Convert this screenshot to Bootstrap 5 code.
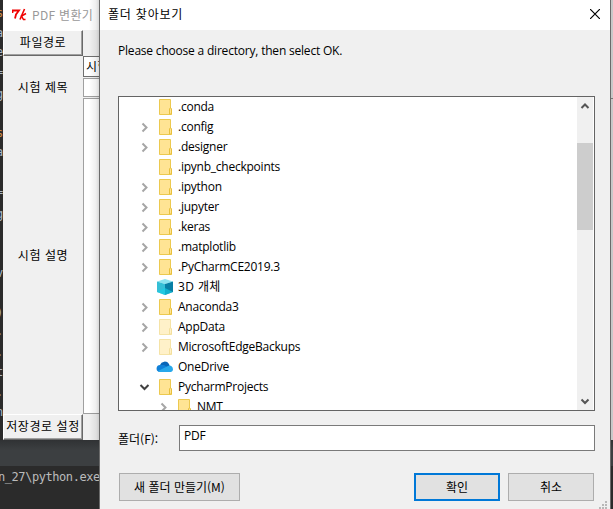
<!DOCTYPE html>
<html lang="ko">
<head>
<meta charset="utf-8">
<title>폴더 찾아보기</title>
<link rel="stylesheet" href="https://cdn.jsdelivr.net/npm/bootstrap@5.3.0/dist/css/bootstrap.min.css">
<style>
html,body{width:613px;height:509px;overflow:hidden}
body{background:#2b2b2b;color:#000;font:12px/20px "Open Sans","Noto Sans CJK KR",sans-serif;letter-spacing:-.24px;position:relative}
.ko{font-family:"Noto Sans CJK KR",sans-serif;letter-spacing:.55px}
.ide{position:absolute;inset:0;font:12px/20px "DejaVu Sans Mono",monospace;letter-spacing:-.44px;color:#a9b7c6}
.ide-bar{height:26px;margin-top:440px;background:linear-gradient(#303234,#3c3f41 10px)}
.ide-glyph{position:absolute;left:-4px}
.key{color:#cc8844}
.tkwin{position:absolute;left:3px;top:0;width:610px;height:440px;background:#f0f0f0}
.tkhead{height:30px;background:#fff;color:#999;padding-left:9px}
.tkside{width:80px}
.tkbtn{height:26px;background:#f0f0f0;border:1px solid;border-color:#fff #696969 #696969 #fff;box-shadow:inset -1px -1px #a0a0a0;line-height:22px;white-space:nowrap}
.tklabel{height:62px;line-height:62px}
.tkdesc{height:296px;line-height:274px}
.entry{border:1px solid #a0a0a0;background:#fff;border-right:0}
.shade{position:absolute;left:86px;top:0;width:14px;height:440px;background:linear-gradient(90deg,#0000,#0001 50%,#0004)}
.edge{position:absolute;left:611px;top:0;width:2px;height:440px;background:#c8c8c8}
.edge i{display:block;height:1px;margin-top:98px;background:#777}
.dlg{position:absolute;left:99px;top:0;width:512px;height:509px;background:#f0f0f0;border:solid #6b6b6b;border-width:0 1px}
.dlghead{height:30px;background:#fff;padding:0 10px 2px 8px}
.tree{height:315px;margin:0 15px 0 18px;border:1px solid #646464;background:#fff;overflow:hidden}
.item{height:20px;line-height:19px;padding-left:20px;white-space:nowrap}
.item.sub{padding-left:39px}
.tw{width:11px;height:20px;flex:none;fill:none;stroke:#a6a6a6;stroke-width:2}
.tw.open{stroke:#404040}
.ic{width:18px;height:20px;margin:0 4px 0 6px;flex:none}
.faded{opacity:.5}
.bar{width:17px;background:#f0f0f0;border-right:1px solid #fff}
.bar svg{width:16px;height:17px;display:block}
.thumb{height:87px;background:#cdcdcd;margin-top:29px}
.field{width:416px;height:26px;border:1px solid #7a7a7a;background:#fff;padding-left:4px;line-height:20px}
.wbtn{height:28px;background:#e1e1e1;border:1px solid #adadad;border-radius:0;padding:0;font-size:12px;line-height:24px;color:#000}
.wbtn.ok{border:2px solid #0078d7;line-height:22px}
.grip{position:absolute;right:2px;bottom:0;width:9px;height:8px}
</style>
<script src="https://cdn.jsdelivr.net/npm/bootstrap@5.3.0/dist/js/bootstrap.bundle.min.js"></script>
</head>
<body>
<svg width="0" height="0" class="position-absolute">
<defs>
<symbol id="folder" viewBox="0 0 18 20"><path d="M3.500 2.500h11v9l1 1v5h-12z" fill="#ffe494" stroke="#ecc94f"/><path d="M13.500 17v-5l1-1.500 1 1.500v5z" fill="#ffe494" stroke="#e8c03c"/></symbol>
<symbol id="right" viewBox="0 0 11 20"><path d="M3.500 6.500l4 4-4 4"/></symbol>
<symbol id="down" viewBox="0 0 11 20"><path d="M1.500 8l4 4 4-4"/></symbol>
</defs></svg>

<div class="ide">
<span class="ide-glyph key" style="top:3px">s</span><span class="ide-glyph" style="top:23px">a</span><span class="ide-glyph" style="top:42px">e</span><span class="ide-glyph" style="top:62px">=</span><span class="ide-glyph" style="top:84px">g</span><span class="ide-glyph key" style="top:123px">s</span><span class="ide-glyph" style="top:142px">a</span><span class="ide-glyph" style="top:182px">=</span><span class="ide-glyph" style="top:204px">g</span><span class="ide-glyph" style="top:263px">v</span><span class="ide-glyph" style="top:303px">)</span><span class="ide-glyph" style="top:321px">.</span><span class="ide-glyph" style="top:342px">.</span><span class="ide-glyph" style="top:362px">t</span><span class="ide-glyph" style="top:382px">.</span><span class="ide-glyph" style="top:402px">n</span>
<div class="ide-bar"></div>
<div class="text-nowrap" style="margin-top:1px;margin-left:-2px;color:#bbb">n_27\python.exe</div>
</div>

<div class="tkwin">
<div class="tkhead d-flex align-items-center">
<svg width="15" height="14" viewBox="0 0 15 14" class="me-1" fill="none" stroke="#f00000"><path d="M.5 5V2.500h6.500L4 6.500 3 10.500" stroke-width="1.800"/><path d="M12.500 1L8 11.500" stroke-width="1.600"/><path d="M14 5.500L9.500 8l2 3.500h2" stroke-width="1.500"/></svg>
<span style="font-family:'Noto Sans CJK KR',sans-serif;letter-spacing:.3px;padding:0 0 1px 1px">PDF 변환기</span>
</div>
<div class="d-flex">
<div class="tkside ko text-center">
<div class="tkbtn">파일경로</div>
<div class="tklabel">시험 제목</div>
<div class="tkdesc">시험 설명</div>
<div class="tkbtn">저장경로 설정</div>
</div>
<div class="flex-fill ko">
<div style="height:26px"></div>
<div class="entry" style="height:21px;padding-left:2px;line-height:18px;border-color:#707070">시험</div>
<div class="entry" style="height:19px;margin-top:1px"></div>
<div class="entry" style="height:316px;margin-top:1px"></div>
</div>
</div>
<div class="shade"></div>
</div>
<div class="edge"><i></i></div>

<div class="dlg d-flex flex-column">
<div class="dlghead d-flex align-items-center justify-content-between ko"><span style="letter-spacing:.8px">폴더 찾아보기</span>
<svg width="10" height="10" viewBox="0 0 10 10"><path d="M0 0l10 10M10 0L0 10" stroke="#000" stroke-width="1.200"/></svg></div>
<div style="padding:11px 0 0 18px;height:66px;letter-spacing:-.2px">Please choose a directory, then select OK.</div>
<div class="tree d-flex flex-none">
<div class="flex-fill">
<div class="item d-flex"><svg class="tw"></svg><svg class="ic"><use href="#folder"/></svg><span>.conda</span></div>
<div class="item d-flex"><svg class="tw"><use href="#right"/></svg><svg class="ic"><use href="#folder"/></svg><span>.config</span></div>
<div class="item d-flex"><svg class="tw"><use href="#right"/></svg><svg class="ic"><use href="#folder"/></svg><span>.designer</span></div>
<div class="item d-flex"><svg class="tw"></svg><svg class="ic"><use href="#folder"/></svg><span>.ipynb_checkpoints</span></div>
<div class="item d-flex"><svg class="tw"><use href="#right"/></svg><svg class="ic"><use href="#folder"/></svg><span>.ipython</span></div>
<div class="item d-flex"><svg class="tw"><use href="#right"/></svg><svg class="ic"><use href="#folder"/></svg><span>.jupyter</span></div>
<div class="item d-flex"><svg class="tw"><use href="#right"/></svg><svg class="ic"><use href="#folder"/></svg><span>.keras</span></div>
<div class="item d-flex"><svg class="tw"><use href="#right"/></svg><svg class="ic"><use href="#folder"/></svg><span>.matplotlib</span></div>
<div class="item d-flex"><svg class="tw"><use href="#right"/></svg><svg class="ic"><use href="#folder"/></svg><span>.PyCharmCE2019.3</span></div>
<div class="item d-flex"><svg class="tw"></svg><svg class="ic" viewBox="0 0 18 20"><path d="M1 4.500L9 2l8 2.500L9 7z" fill="#8be4f0"/><path d="M1 4.500L9 7v11l-8-3z" fill="#35bfd6"/><path d="M17 4.500L9 7v11l8-3z" fill="#087fa5"/><path d="M1 15l8-4 8 4-8 3z" fill="#16d0e8" opacity=".6"/></svg><span style="letter-spacing:.4px">3D 개체</span></div>
<div class="item d-flex"><svg class="tw"><use href="#right"/></svg><svg class="ic"><use href="#folder"/></svg><span>Anaconda3</span></div>
<div class="item d-flex"><svg class="tw"><use href="#right"/></svg><svg class="ic faded"><use href="#folder"/></svg><span>AppData</span></div>
<div class="item d-flex"><svg class="tw"><use href="#right"/></svg><svg class="ic faded"><use href="#folder"/></svg><span>MicrosoftEdgeBackups</span></div>
<div class="item d-flex"><svg class="tw"></svg><svg class="ic" viewBox="0 0 18 20"><path d="M4 8a5 5 0 0 1 9-1l1 3-10 2z" fill="#0866b8"/><path d="M4 8a3.600 3.600 0 0 0-1 7l10-4-5-3z" fill="#1080d8"/><path d="M12 9a3.200 3.200 0 0 1 3 6H3.500L2 14z" fill="#28a8ea"/></svg><span>OneDrive</span></div>
<div class="item d-flex"><svg class="tw open"><use href="#down"/></svg><svg class="ic"><use href="#folder"/></svg><span>PycharmProjects</span></div>
<div class="item sub d-flex"><svg class="tw"><use href="#right"/></svg><svg class="ic"><use href="#folder"/></svg><span>NMT</span></div>
</div>
<div class="bar d-flex flex-column">
<svg viewBox="0 0 16 17"><path d="M4.500 11l3.500-3.500 3.500 3.500" fill="none" stroke="#555" stroke-width="2"/></svg>
<div class="thumb"></div>
<svg class="mt-auto" viewBox="0 0 16 17"><path d="M4.500 6.500L8 10l3.500-3.500" fill="none" stroke="#555" stroke-width="2"/></svg>
</div>
</div>
<div class="d-flex" style="margin:14px 0 0 18px"><label class="ko" style="width:61px;padding-top:4px;letter-spacing:0">폴더(F):</label><div class="field">PDF</div></div>
<div class="d-flex ko" style="margin:22px 0 0 19px"><button class="btn wbtn" style="width:121px">새 폴더 만들기(M)</button><button class="btn wbtn ok" style="width:86px;margin-left:174px">확인</button><button class="btn wbtn" style="width:86px;margin-left:8px">취소</button></div>
<svg class="grip" viewBox="0 0 9 8" fill="#b8b8b8"><path d="M6 0h2v2H6zM3 3h2v2H3zM6 3h2v2H6zM0 6h2v2H0zM3 6h2v2H3zM6 6h2v2H6z"/></svg>
</div>
</body>
</html>
